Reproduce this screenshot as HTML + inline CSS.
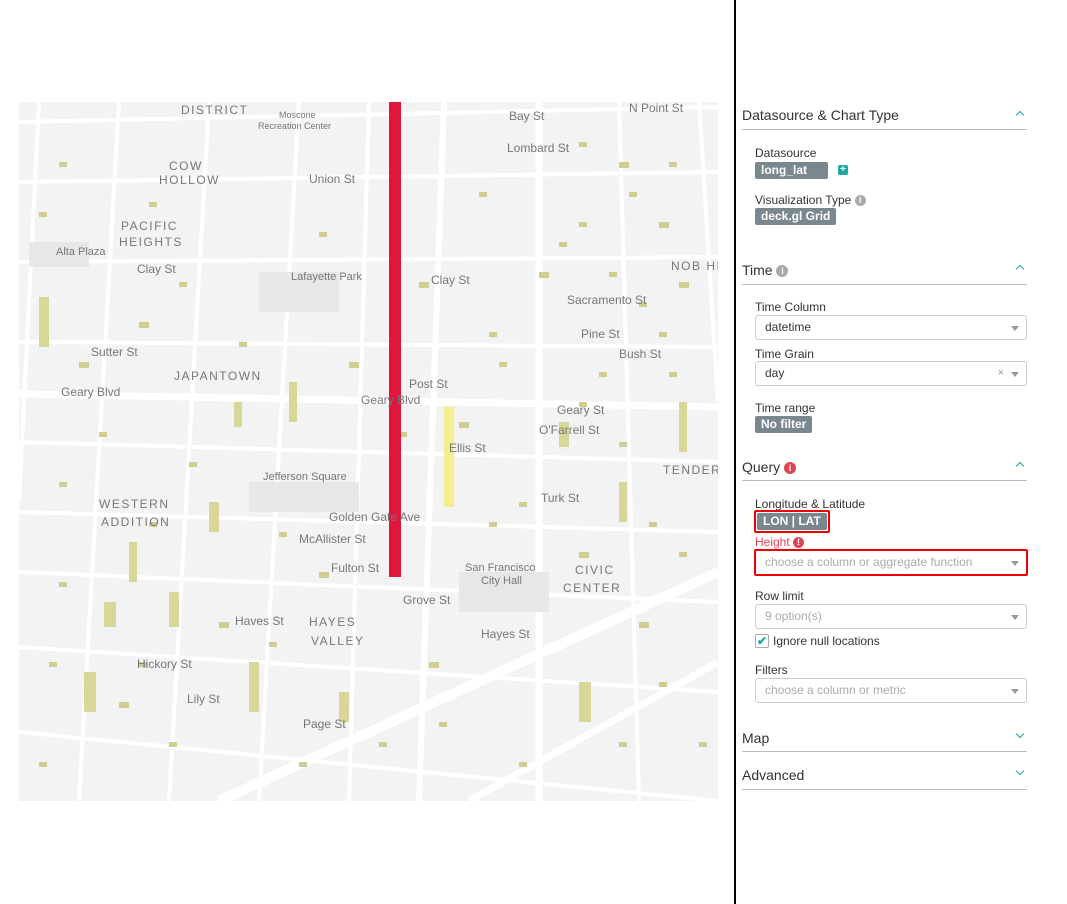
<!DOCTYPE html>
<html><head><meta charset="utf-8"><style>
body{margin:0;width:1067px;height:904px;background:#fff;position:relative;overflow:hidden;font-family:"Liberation Sans",sans-serif;color:#333}
.abs{position:absolute}
.vline{left:734px;top:0;width:2px;height:904px;background:#000}
.hd{left:742px;font-size:14px;color:#333}
.hr{left:742px;width:285px;height:1px;background:#bbb}
.chev{left:1017px;width:5px;height:5px;border-left:1.5px solid #1fa8a0;border-top:1.5px solid #1fa8a0}
.up{transform:rotate(45deg)}
.dn{transform:rotate(225deg)}
.lbl{left:755px;font-size:12px;color:#333}
.tag{background:#7b878f;color:#fff;font-size:12px;font-weight:bold;padding:1px 6px;border-radius:2px;height:15px;line-height:15px}
.sel{left:755px;width:270px;height:23px;border:1px solid #ccc;border-radius:3px;font-size:12px;line-height:23px;text-indent:9px;box-sizing:content-box}
.car{position:absolute;right:7px;top:10px;border-left:4px solid transparent;border-right:4px solid transparent;border-top:5px solid #999}
.ph{color:#aaa}
.info{display:inline-block;width:11px;height:11px;border-radius:50%;background:#aaa;color:#fff;font-size:9px;line-height:11px;text-align:center;font-weight:bold;vertical-align:1px}
</style></head><body>
<svg class="abs" style="left:19px;top:102px" width="699" height="699" viewBox="0 0 699 699">
<rect width="699" height="699" fill="#f3f3f3"/>
<g stroke="#fff" stroke-width="4" fill="none">
<path d="M0 20 L699 5"/><path d="M0 80 L699 70"/><path d="M0 160 L699 155"/><path d="M0 240 L699 245"/>
<path d="M0 292 L699 305" stroke-width="7"/><path d="M0 340 L699 360"/><path d="M0 410 L699 430"/><path d="M0 470 L699 500"/>
<path d="M0 545 L699 590"/><path d="M0 630 L699 699"/>
<path d="M20 0 L0 400"/><path d="M100 0 L60 699"/><path d="M190 0 L150 699"/><path d="M280 0 L240 699"/>
<path d="M350 0 L330 699"/><path d="M425 0 L400 699" stroke-width="6"/><path d="M520 0 L520 699" stroke-width="7"/>
<path d="M600 0 L620 699"/><path d="M680 0 L699 300"/>
<path d="M200 699 L699 470" stroke-width="10"/><path d="M450 699 L699 560" stroke-width="7"/>
</g>
<g fill="#e7e7e7"><rect x="240" y="170" width="80" height="40"/><rect x="230" y="380" width="110" height="30"/><rect x="10" y="140" width="60" height="25"/><rect x="440" y="470" width="90" height="40"/></g>
<g fill="#d9d69a">
<rect x="20" y="195" width="10" height="50"/><rect x="270" y="280" width="8" height="40"/><rect x="215" y="300" width="8" height="25"/><rect x="110" y="440" width="8" height="40"/>
<rect x="190" y="400" width="10" height="30"/><rect x="85" y="500" width="12" height="25"/><rect x="150" y="490" width="10" height="35"/>
<rect x="230" y="560" width="10" height="50"/><rect x="65" y="570" width="12" height="40"/><rect x="600" y="380" width="8" height="40"/><rect x="540" y="320" width="10" height="25"/>
<rect x="660" y="300" width="8" height="50"/><rect x="560" y="580" width="12" height="40"/><rect x="320" y="590" width="10" height="30"/>
</g>
<g fill="#cfcd92">
<rect x="40" y="60" width="8" height="5"/><rect x="130" y="100" width="8" height="5"/><rect x="300" y="130" width="8" height="5"/><rect x="460" y="90" width="8" height="5"/><rect x="560" y="120" width="8" height="5"/><rect x="620" y="200" width="8" height="5"/><rect x="470" y="230" width="8" height="5"/><rect x="580" y="270" width="8" height="5"/><rect x="80" y="330" width="8" height="5"/><rect x="170" y="360" width="8" height="5"/><rect x="380" y="330" width="8" height="5"/><rect x="500" y="400" width="8" height="5"/><rect x="630" y="420" width="8" height="5"/><rect x="40" y="480" width="8" height="5"/><rect x="250" y="540" width="8" height="5"/><rect x="360" y="640" width="8" height="5"/><rect x="500" y="660" width="8" height="5"/><rect x="150" y="640" width="8" height="5"/><rect x="640" y="580" width="8" height="5"/><rect x="20" y="660" width="8" height="5"/>
<rect x="600" y="60" width="10" height="6"/><rect x="640" y="120" width="10" height="6"/><rect x="660" y="180" width="10" height="6"/><rect x="520" y="170" width="10" height="6"/><rect x="400" y="180" width="10" height="6"/><rect x="120" y="220" width="10" height="6"/><rect x="60" y="260" width="10" height="6"/><rect x="330" y="260" width="10" height="6"/><rect x="440" y="320" width="10" height="6"/><rect x="560" y="450" width="10" height="6"/><rect x="620" y="520" width="10" height="6"/><rect x="300" y="470" width="10" height="6"/><rect x="200" y="520" width="10" height="6"/><rect x="100" y="600" width="10" height="6"/><rect x="410" y="560" width="10" height="6"/>
<rect x="560" y="40" width="8" height="5"/><rect x="610" y="90" width="8" height="5"/><rect x="650" y="60" width="8" height="5"/><rect x="540" y="140" width="8" height="5"/><rect x="590" y="170" width="8" height="5"/><rect x="640" y="230" width="8" height="5"/><rect x="480" y="260" width="8" height="5"/><rect x="560" y="300" width="8" height="5"/><rect x="650" y="270" width="8" height="5"/><rect x="600" y="340" width="8" height="5"/><rect x="470" y="420" width="8" height="5"/><rect x="660" y="450" width="8" height="5"/><rect x="20" y="110" width="8" height="5"/><rect x="160" y="180" width="8" height="5"/><rect x="220" y="240" width="8" height="5"/><rect x="40" y="380" width="8" height="5"/><rect x="130" y="420" width="8" height="5"/><rect x="260" y="430" width="8" height="5"/><rect x="30" y="560" width="8" height="5"/><rect x="120" y="560" width="8" height="5"/><rect x="280" y="660" width="8" height="5"/><rect x="420" y="620" width="8" height="5"/><rect x="600" y="640" width="8" height="5"/><rect x="680" y="640" width="8" height="5"/>
</g>
<rect x="425" y="305" width="10" height="100" fill="#f3ee8e"/>
<rect x="370" y="0" width="12" height="475" fill="#e0163c"/>
<g font-size="12" fill="#777" font-family="Liberation Sans,sans-serif">
<text x="162" y="12" letter-spacing="1.5">DISTRICT</text><text x="260" y="16" font-size="9">Moscone</text><text x="239" y="27" font-size="9">Recreation Center</text>
<text x="490" y="18">Bay St</text><text x="610" y="10">N Point St</text><text x="488" y="50">Lombard St</text><text x="290" y="81">Union St</text>
<text x="150" y="68" letter-spacing="1.5">COW</text><text x="140" y="82" letter-spacing="1.5">HOLLOW</text>
<text x="102" y="128" letter-spacing="1.5">PACIFIC</text><text x="100" y="144" letter-spacing="1.5">HEIGHTS</text>
<text x="37" y="153" font-size="11">Alta Plaza</text><text x="118" y="171">Clay St</text><text x="272" y="178" font-size="11">Lafayette Park</text>
<text x="412" y="182">Clay St</text><text x="548" y="202">Sacramento St</text><text x="562" y="236">Pine St</text><text x="600" y="256">Bush St</text>
<text x="652" y="168" letter-spacing="1.5">NOB HILL</text><text x="72" y="254">Sutter St</text><text x="155" y="278" letter-spacing="1.5">JAPANTOWN</text>
<text x="390" y="286">Post St</text><text x="42" y="294">Geary Blvd</text><text x="342" y="302">Geary Blvd</text><text x="538" y="312">Geary St</text>
<text x="520" y="332">O'Farrell St</text><text x="430" y="350">Ellis St</text><text x="244" y="378" font-size="11">Jefferson Square</text>
<text x="644" y="372" letter-spacing="1.5">TENDER</text><text x="80" y="406" letter-spacing="1.5">WESTERN</text><text x="82" y="424" letter-spacing="1.5">ADDITION</text>
<text x="522" y="400">Turk St</text><text x="310" y="419">Golden Gate Ave</text><text x="280" y="441">McAllister St</text>
<text x="446" y="469" font-size="11">San Francisco</text><text x="462" y="482" font-size="11">City Hall</text>
<text x="556" y="472" letter-spacing="1.5">CIVIC</text><text x="544" y="490" letter-spacing="1.5">CENTER</text>
<text x="312" y="470">Fulton St</text><text x="384" y="502">Grove St</text><text x="216" y="523">Haves St</text><text x="462" y="536">Hayes St</text>
<text x="290" y="524" letter-spacing="1.5">HAYES</text><text x="292" y="543" letter-spacing="1.5">VALLEY</text>
<text x="118" y="566">Hickory St</text><text x="168" y="601">Lily St</text><text x="284" y="626">Page St</text>
</g>
</svg>
<div class="abs vline"></div>

<div class="abs hd" style="top:107px">Datasource &amp; Chart Type</div>
<div class="abs chev up" style="top:112px"></div>
<div class="abs hr" style="top:129px"></div>
<div class="abs lbl" style="top:146px">Datasource</div>
<div class="abs tag" style="left:755px;top:162px;width:61px">long_lat <span style="font-weight:normal;margin-left:6px">⌄</span></div>
<div class="abs" style="left:838px;top:165px;width:10px;height:10px;background:#1fa8a0;border-radius:2px;color:#fff;font-size:10px;line-height:10px;text-align:center;font-weight:bold">+</div>
<div class="abs lbl" style="top:193px">Visualization Type <span class="info">i</span></div>
<div class="abs tag" style="left:755px;top:208px">deck.gl Grid</div>

<div class="abs hd" style="top:262px">Time <span class="info" style="width:12px;height:12px;line-height:12px">i</span></div>
<div class="abs chev up" style="top:266px"></div>
<div class="abs hr" style="top:284px"></div>
<div class="abs lbl" style="top:300px">Time Column</div>
<div class="abs sel" style="top:315px">datetime<div class="car"></div></div>
<div class="abs lbl" style="top:347px">Time Grain</div>
<div class="abs sel" style="top:361px">day<span style="position:absolute;right:22px;color:#999;font-size:11px">×</span><div class="car"></div></div>
<div class="abs lbl" style="top:401px">Time range</div>
<div class="abs tag" style="left:755px;top:416px">No filter</div>

<div class="abs hd" style="top:459px">Query <span class="info" style="background:#e04355;width:12px;height:12px;line-height:12px">i</span></div>
<div class="abs chev up" style="top:463px"></div>
<div class="abs hr" style="top:480px"></div>
<div class="abs lbl" style="top:497px">Longitude &amp; Latitude</div>
<div class="abs" style="left:754px;top:510px;border:2px solid #e00;border-radius:2px;padding:1px"><div class="tag">LON | LAT</div></div>
<div class="abs lbl" style="top:535px;color:#e04355">Height <span class="info" style="background:#e04355">!</span></div>
<div class="abs sel ph" style="top:549px;left:754px;width:270px;border:2px solid #e00;border-radius:2px">choose a column or aggregate function<div class="car"></div></div>
<div class="abs lbl" style="top:589px">Row limit</div>
<div class="abs sel ph" style="top:604px">9 option(s)<div class="car"></div></div>
<div class="abs" style="left:755px;top:634px;width:12px;height:12px;border:1px solid #aaa;border-radius:2px;color:#1fa8a0;font-size:12px;line-height:12px;text-align:center;font-weight:bold">✔</div>
<div class="abs lbl" style="left:773px;top:634px">Ignore null locations</div>
<div class="abs lbl" style="top:663px">Filters</div>
<div class="abs sel ph" style="top:678px">choose a column or metric<div class="car"></div></div>

<div class="abs hd" style="top:730px">Map</div>
<div class="abs chev dn" style="top:731px"></div>
<div class="abs hr" style="top:751px"></div>
<div class="abs hd" style="top:767px">Advanced</div>
<div class="abs chev dn" style="top:768px"></div>
<div class="abs hr" style="top:789px"></div>
</body></html>
